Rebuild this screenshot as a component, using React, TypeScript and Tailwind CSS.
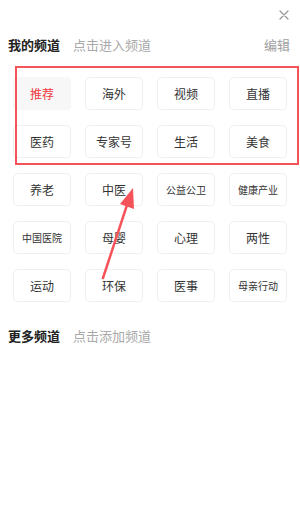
import React from "react";

const rows: string[][] = [
  ["推荐", "海外", "视频", "直播"],
  ["医药", "专家号", "生活", "美食"],
  ["养老", "中医", "公益公卫", "健康产业"],
  ["中国医院", "母婴", "心理", "两性"],
  ["运动", "环保", "医事", "母亲行动"],
];

export default function App() {
  const items = rows.flat();
  return (
    <div className="relative w-[300px] h-[520px] bg-white font-['Noto_Sans_CJK_SC','Noto_Sans',sans-serif] overflow-hidden">
      <div className="h-[30px] flex items-center justify-end pr-[11px]">
        <svg width="10" height="10" viewBox="0 0 10 10">
          <path d="M1 1L9 9M9 1L1 9" stroke="#9a9a9a" strokeWidth="1.3" strokeLinecap="round" />
        </svg>
      </div>
      <div className="h-[30px] flex items-center px-[8px]">
        <span className="text-[13px] font-bold text-[#222]">我的频道</span>
        <span className="ml-[13px] text-[13px] text-[#a8a8a8]">点击进入频道</span>
        <span className="ml-auto mr-[2px] text-[13px] text-[#a0a0a0]">编辑</span>
      </div>
      <div className="mt-[17px] px-[13px] grid grid-cols-4 gap-x-[14px] gap-y-[15px]">
        {items.map((t, i) => (
          <div
            key={i}
            className={
              i === 0
                ? "h-[33px] rounded-[4px] bg-[#f7f7f7] flex items-center justify-center text-[12px] text-[#f0393f]"
                : "h-[33px] rounded-[4px] border border-[#f0f0f0] bg-white flex items-center justify-center text-[#333] " +
                  (t.length >= 4 ? "text-[10px]" : "text-[12px]")
            }
          >
            {t}
          </div>
        ))}
      </div>
      <div className="mt-[19px] h-[30px] flex items-center px-[8px]">
        <span className="text-[13px] font-bold text-[#222]">更多频道</span>
        <span className="ml-[13px] text-[13px] text-[#a8a8a8]">点击添加频道</span>
      </div>
      <div className="absolute left-[15px] top-[66px] w-[284px] h-[99px] border-2 border-[#f5535a] pointer-events-none" />
      <svg className="absolute left-0 top-0 pointer-events-none" width="300" height="520">
        <line x1="103" y1="278" x2="127" y2="205" stroke="#f5535a" strokeWidth="2.5" strokeLinecap="round" />
        <polygon points="133,188 120,204 134,209" fill="#f5535a" />
      </svg>
    </div>
  );
}
